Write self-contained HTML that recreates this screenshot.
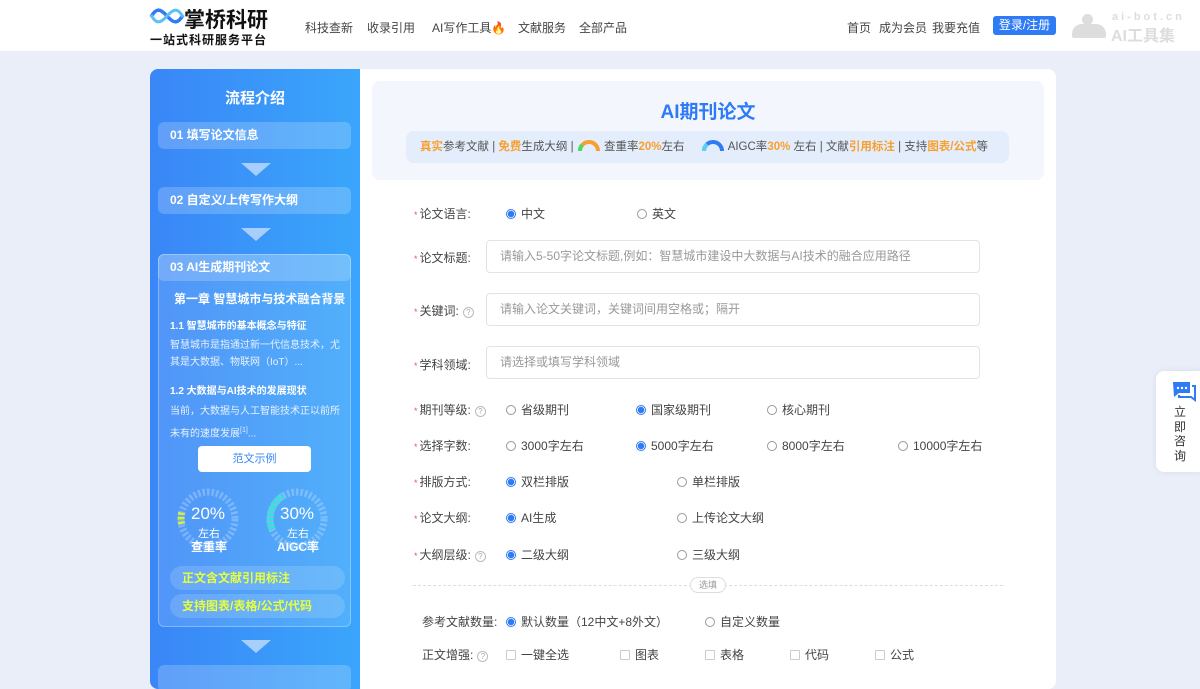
<!DOCTYPE html>
<html><head><meta charset="utf-8">
<style>
*{margin:0;padding:0;box-sizing:border-box}
body{width:1200px;height:675px;overflow:hidden;background:#e9eef8;font-family:"Liberation Sans","Noto Sans CJK SC",sans-serif;color:#333;position:relative;font-size:12px}
.hdr{position:absolute;left:0;top:0;width:1200px;height:51px;background:#fff}
.a{position:absolute;white-space:nowrap}
.nav{font-size:12px;color:#444;top:19px}
.card{position:absolute;left:150px;top:69px;width:906px;height:620px;background:#fff;border-radius:8px;overflow:hidden}
.side{position:absolute;left:0;top:0;width:210px;height:620px;background:linear-gradient(90deg,#3a86f7,#3aa6fb)}
.step{position:absolute;left:8px;width:193px;height:27px;background:rgba(255,255,255,.2);border-radius:6px;color:#fff;font-weight:bold;font-size:12px;line-height:27px;padding-left:12px}
.arr{position:absolute;left:91px;width:0;height:0;border-left:15px solid transparent;border-right:15px solid transparent;border-top:13px solid rgba(255,255,255,.55)}
.lbl{position:absolute;left:414px;font-size:12px;color:#444}
.lbl b{color:#e55;font-weight:normal;font-size:9px;margin-right:2px}
.r{position:absolute;font-size:12px;color:#444;white-space:nowrap}
.r i{display:inline-block;width:10px;height:10px;border:1px solid #999;border-radius:50%;vertical-align:-1px;margin-right:5px}
.r i.on{border:1px solid #2f7bf5;background:radial-gradient(circle,#2f7bf5 0 3px,#fff 3.5px)}
.r i.cb{border-radius:1px;border-color:#ccc}
.inp{position:absolute;left:486px;width:494px;height:33px;border:1px solid #e3e3e3;border-radius:4px;font-size:12px;color:#999;line-height:31px;padding-left:13px}
.q{display:inline-block;width:11px;height:11px;border:1px solid #bbb;border-radius:50%;font-size:8px;color:#aaa;text-align:center;line-height:9px;margin-left:4px;vertical-align:0}
.o{color:#f7a030;font-weight:bold}
</style></head><body>
<div class="hdr">
<svg class="a" style="left:149px;top:6px" width="36" height="20" viewBox="0 0 36 20"><path d="M2 11 C7 2,11 2,18 10 S29 18,34 9" stroke="#2f7bf5" stroke-width="3.5" fill="none"/><path d="M2 9 C7 18,11 18,18 10 S29 2,34 11" stroke="#5cc0f5" stroke-width="3" fill="none"/></svg>
<div class="a" style="left:184px;top:4px;font-size:21px;font-weight:bold;color:#111">掌桥科研</div>
<div class="a" style="left:150px;top:31px;font-size:12px;font-weight:bold;color:#111;letter-spacing:1px">一站式科研服务平台</div>
<div class="a nav" style="left:305px">科技查新</div>
<div class="a nav" style="left:367px">收录引用</div>
<div class="a nav" style="left:432px">AI写作工具<span style="color:#f60">🔥</span></div>
<div class="a nav" style="left:518px">文献服务</div>
<div class="a nav" style="left:579px">全部产品</div>
<div class="a nav" style="left:847px">首页</div>
<div class="a nav" style="left:879px">成为会员</div>
<div class="a nav" style="left:932px">我要充值</div>
<div class="a" style="left:993px;top:16px;width:63px;height:19px;background:#2f7bf5;border-radius:3px;color:#fff;font-size:12px;text-align:center;line-height:19px">登录/注册</div>
<div class="a" style="left:1072px;top:14px;width:34px;height:24px"><div class="a" style="left:10px;top:0;width:11px;height:11px;border-radius:50%;background:#ddd"></div><div class="a" style="left:0;top:10px;width:34px;height:14px;background:#ddd;border-radius:10px 10px 2px 2px"></div></div>
<div class="a" style="left:1112px;top:11px;font-size:11px;font-weight:bold;color:#ddd;letter-spacing:3px">ai-bot.cn</div>
<div class="a" style="left:1111px;top:22px;font-size:16px;font-weight:bold;color:#ddd">AI工具集</div>
</div>

<div class="card">
<div class="side">
<div class="a" style="left:0;width:210px;text-align:center;top:18px;color:#fff;font-size:15px;font-weight:bold">流程介绍</div>
<div class="step" style="top:53px">01 填写论文信息</div>
<div class="arr" style="top:94px"></div>
<div class="step" style="top:118px">02 自定义/上传写作大纲</div>
<div class="arr" style="top:159px"></div>
<div class="a" style="left:8px;top:185px;width:193px;height:373px;background:rgba(255,255,255,.12);border:1px solid rgba(255,255,255,.3);border-radius:6px"></div>
<div class="step" style="top:185px">03 AI生成期刊论文</div>
<div class="a" style="left:24px;top:221px;color:#fff;font-weight:bold;font-size:12px">第一章 智慧城市与技术融合背景</div>
<div class="a" style="left:20px;top:248px;color:#fff;font-weight:bold;font-size:10px">1.1 智慧城市的基本概念与特征</div>
<div class="a" style="left:20px;top:268px;color:#e8f1ff;font-size:10px;line-height:17px;white-space:normal;width:172px">智慧城市是指通过新一代信息技术，尤其是大数据、物联网（IoT）...</div>
<div class="a" style="left:20px;top:313px;color:#fff;font-weight:bold;font-size:10px">1.2 大数据与AI技术的发展现状</div>
<div class="a" style="left:20px;top:333px;color:#e8f1ff;font-size:10px;line-height:19px;white-space:normal;width:172px">当前，大数据与人工智能技术正以前所未有的速度发展<sup style="font-size:7px">[1]</sup>...</div>
<div class="a" style="left:48px;top:377px;width:113px;height:26px;background:#fff;border-radius:4px;color:#3a86f7;text-align:center;line-height:26px;font-size:11px">范文示例</div>
<svg class="a" style="left:26px;top:418px" width="64" height="64" viewBox="0 0 64 64"><circle cx="32" cy="32" r="27" fill="none" stroke="rgba(255,255,255,.25)" stroke-width="7" stroke-dasharray="2.5 2"/><path d="M5.7 37 A27 27 0 0 1 6 24" fill="none" stroke="#d6f03a" stroke-width="7" stroke-dasharray="2.5 2"/></svg>
<svg class="a" style="left:115px;top:418px" width="64" height="64" viewBox="0 0 64 64"><circle cx="32" cy="32" r="27" fill="none" stroke="rgba(255,255,255,.25)" stroke-width="7" stroke-dasharray="2.5 2"/><path d="M7 42 A27 27 0 0 1 18 9" fill="none" stroke="#2de8d0" stroke-width="7" stroke-dasharray="2.5 2"/></svg>
<div class="a" style="left:41px;top:435px;color:#fff;font-size:17px">20%</div>
<div class="a" style="left:48px;top:456px;color:#fff;font-size:11px">左右</div>
<div class="a" style="left:41px;top:469px;color:#fff;font-size:12px;font-weight:bold">查重率</div>
<div class="a" style="left:130px;top:435px;color:#fff;font-size:17px">30%</div>
<div class="a" style="left:137px;top:456px;color:#fff;font-size:11px">左右</div>
<div class="a" style="left:127px;top:469px;color:#fff;font-size:12px;font-weight:bold">AIGC率</div>
<div class="a" style="left:20px;top:497px;width:175px;height:24px;border-radius:12px;background:rgba(255,255,255,.15);color:#e8ff3a;font-weight:bold;font-size:12px;line-height:24px;padding-left:12px">正文含文献引用标注</div>
<div class="a" style="left:20px;top:525px;width:175px;height:24px;border-radius:12px;background:rgba(255,255,255,.15);color:#e8ff3a;font-weight:bold;font-size:12px;line-height:24px;padding-left:12px">支持图表/表格/公式/代码</div>
<div class="arr" style="top:571px"></div>
<div class="step" style="top:596px"></div>
</div>
<div class="a" style="left:222px;top:12px;width:672px;height:99px;background:#f3f7fd;border-radius:8px"></div>
<div class="a" style="left:222px;top:28px;width:672px;text-align:center;color:#2f7bf5;font-size:19px;font-weight:bold">AI期刊论文</div>
<div class="a" style="left:256px;top:62px;width:603px;height:32px;background:#e3edfb;border-radius:8px;font-size:11.5px;color:#555;line-height:32px;padding-left:14px"><span class="o">真实</span>参考文献 | <span class="o">免费</span>生成大纲 | <svg width="24" height="12" viewBox="0 0 24 12" style="vertical-align:-1px"><path d="M3 12 A9 9 0 0 1 21 12" fill="none" stroke="#f7a030" stroke-width="4"/><path d="M3 12 A9 9 0 0 1 5 6" fill="none" stroke="#4cd964" stroke-width="4"/></svg> 查重率<span class="o">20%</span>左右 &nbsp; &nbsp; <svg width="24" height="12" viewBox="0 0 24 12" style="vertical-align:-1px"><path d="M3 12 A9 9 0 0 1 21 12" fill="none" stroke="#2f7bf5" stroke-width="4"/><path d="M3 12 A9 9 0 0 1 6 5" fill="none" stroke="#5ad0f5" stroke-width="4"/></svg> AIGC率<span class="o">30%</span> 左右 | 文献<span class="o">引用标注</span> | 支持<span class="o">图表/公式</span>等</div>
</div>

<div class="lbl" style="top:205px"><b>*</b>论文语言:</div>
<div class="r" style="left:506px;top:205px"><i class="on"></i>中文</div>
<div class="r" style="left:637px;top:205px"><i></i>英文</div>
<div class="lbl" style="top:249px"><b>*</b>论文标题:</div>
<div class="inp" style="top:240px">请输入5-50字论文标题,例如：智慧城市建设中大数据与AI技术的融合应用路径</div>
<div class="lbl" style="top:302px"><b>*</b>关键词:<span class="q">?</span></div>
<div class="inp" style="top:293px">请输入论文关键词，关键词间用空格或；隔开</div>
<div class="lbl" style="top:356px"><b>*</b>学科领域:</div>
<div class="inp" style="top:346px">请选择或填写学科领域</div>

<div class="lbl" style="top:401px"><b>*</b>期刊等级:<span class="q">?</span></div>
<div class="r" style="left:506px;top:401px"><i></i>省级期刊</div>
<div class="r" style="left:636px;top:401px"><i class="on"></i>国家级期刊</div>
<div class="r" style="left:767px;top:401px"><i></i>核心期刊</div>
<div class="lbl" style="top:437px"><b>*</b>选择字数:</div>
<div class="r" style="left:506px;top:437px"><i></i>3000字左右</div>
<div class="r" style="left:636px;top:437px"><i class="on"></i>5000字左右</div>
<div class="r" style="left:767px;top:437px"><i></i>8000字左右</div>
<div class="r" style="left:898px;top:437px"><i></i>10000字左右</div>
<div class="lbl" style="top:473px"><b>*</b>排版方式:</div>
<div class="r" style="left:506px;top:473px"><i class="on"></i>双栏排版</div>
<div class="r" style="left:677px;top:473px"><i></i>单栏排版</div>
<div class="lbl" style="top:509px"><b>*</b>论文大纲:</div>
<div class="r" style="left:506px;top:509px"><i class="on"></i>AI生成</div>
<div class="r" style="left:677px;top:509px"><i></i>上传论文大纲</div>
<div class="lbl" style="top:546px"><b>*</b>大纲层级:<span class="q">?</span></div>
<div class="r" style="left:506px;top:546px"><i class="on"></i>二级大纲</div>
<div class="r" style="left:677px;top:546px"><i></i>三级大纲</div>
<div class="a" style="left:413px;top:585px;width:590px;border-top:1px dashed #ddd"></div>
<div class="a" style="left:690px;top:577px;width:36px;height:16px;background:#fff;border:1px solid #ddd;border-radius:8px;font-size:9px;color:#999;text-align:center;line-height:14px">选填</div>
<div class="lbl" style="top:613px;left:422px">参考文献数量:</div>
<div class="r" style="left:506px;top:613px"><i class="on"></i>默认数量（12中文+8外文）</div>
<div class="r" style="left:705px;top:613px"><i></i>自定义数量</div>
<div class="lbl" style="top:646px;left:422px">正文增强:<span class="q">?</span></div>
<div class="r" style="left:506px;top:646px"><i class="cb"></i>一键全选</div>
<div class="r" style="left:620px;top:646px"><i class="cb"></i>图表</div>
<div class="r" style="left:705px;top:646px"><i class="cb"></i>表格</div>
<div class="r" style="left:790px;top:646px"><i class="cb"></i>代码</div>
<div class="r" style="left:875px;top:646px"><i class="cb"></i>公式</div>

<div class="a" style="left:1156px;top:371px;width:50px;height:101px;background:#fff;border-radius:8px;box-shadow:0 0 6px rgba(0,0,0,.08)"></div>
<svg class="a" style="left:1172px;top:380px" width="24" height="22" viewBox="0 0 24 22"><path d="M1 2 h17 v11 h-11 l-5 4 z" fill="#2f7bf5"/><path d="M20 6 h3 v14 l-4 -3 h-12 v-2" fill="none" stroke="#2f7bf5" stroke-width="2"/><circle cx="6" cy="8" r="1.2" fill="#fff"/><circle cx="10" cy="8" r="1.2" fill="#fff"/><circle cx="14" cy="8" r="1.2" fill="#fff"/></svg>
<div class="a" style="left:1174px;top:405px;width:14px;font-size:12px;line-height:14.5px;color:#333;white-space:normal">立即咨询</div>
</body></html>
